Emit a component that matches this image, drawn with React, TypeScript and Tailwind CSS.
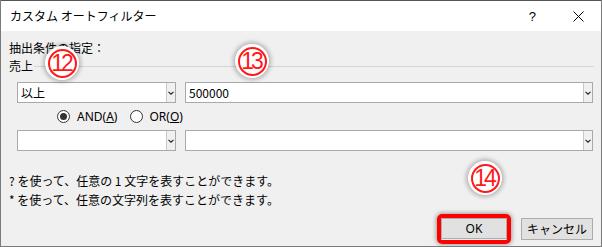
import React from "react";

const font = { fontFamily: '"Noto Sans CJK JP", "Noto Sans", sans-serif' };

function Combo({ value, className }: { value?: string; className: string }) {
  return (
    <div className={`flex h-[21px] border border-[#a9a9a9] bg-white ${className}`}>
      <div className="flex-1 pl-[3px] text-[12px] leading-[19px] text-black">{value}</div>
      <div className="flex w-[9px] items-center justify-center border-l border-[#c8c8c8] bg-[#f0f0f0]">
        <svg width="6" height="4" viewBox="0 0 6 4">
          <path d="M0.5 0.8 L3 3.2 L5.5 0.8" fill="none" stroke="#222" strokeWidth="1.1" />
        </svg>
      </div>
    </div>
  );
}

function Badge({ n, className }: { n: string; className: string }) {
  return (
    <div
      className={`absolute flex h-[34px] w-[34px] items-center justify-center rounded-full bg-white shadow-[0_0_4px_2px_rgba(0,0,0,0.25)] ${className}`}
    >
      <div className="flex h-[29px] w-[29px] items-center justify-center rounded-full border-[2px] border-[#ff1a1a]">
        <span
          className="text-[23px] font-normal leading-none tracking-[-3px] text-[#ff1a1a] pr-[2px]"
          style={{ fontFamily: '"Liberation Sans", sans-serif' }}
        >
          {n}
        </span>
      </div>
    </div>
  );
}

function Radio({ checked }: { checked?: boolean }) {
  return (
    <div className="flex h-[13px] w-[13px] items-center justify-center rounded-full border border-[#333] bg-white">
      {checked && <div className="h-[7px] w-[7px] rounded-full bg-[#333]" />}
    </div>
  );
}

export default function App() {
  return (
    <div
      className="relative h-[247px] w-[602px] overflow-hidden border-x border-b border-[#7a7a7a] bg-[#f0f0f0] text-[12px] text-black"
      style={font}
    >
      {/* title bar */}
      <div className="flex h-[31px] items-center border-t border-[#555] bg-white pl-[9px]">
        <span className="text-[12px] leading-none">カスタム オートフィルター</span>
        <div className="flex-1" />
        <span className="mr-[37px] text-[13px] leading-none" style={{ fontFamily: '"Liberation Sans", sans-serif' }}>?</span>
        <svg width="11" height="11" viewBox="0 0 11 11" className="mr-[17px]">
          <path d="M0.5 0.5 L10.5 10.5 M10.5 0.5 L0.5 10.5" stroke="#000" strokeWidth="1" />
        </svg>
      </div>

      <div className="flex flex-col pl-[8px] pr-[7px]">
        <div className="mt-[9px] h-[15px] leading-[15px]">抽出条件の指定：</div>
        <div className="mt-[3px] flex h-[16px] items-center">
          <span className="leading-[16px]">売上</span>
          <div className="ml-[1px] h-px flex-1 bg-[#d5d5d5]" />
        </div>

        <div className="mt-[8px] flex gap-[9px] pl-[8px] pr-[1px]">
          <Combo value="以上" className="w-[159px]" />
          <Combo value="500000" className="flex-1" />
        </div>

        <div className="mt-[6px] flex h-[15px] items-center pl-[48px]">
          <Radio checked />
          <span className="ml-[7px] leading-none" style={{ fontFamily: '"Noto Sans", sans-serif' }}>
            AND(<span className="underline">A</span>)
          </span>
          <div className="ml-[13px]">
            <Radio />
          </div>
          <span className="ml-[6px] leading-none" style={{ fontFamily: '"Noto Sans", sans-serif' }}>
            OR(<span className="underline">O</span>)
          </span>
        </div>

        <div className="mt-[6px] flex gap-[9px] pl-[8px] pr-[1px]">
          <Combo className="w-[159px]" />
          <Combo className="flex-1" />
        </div>

        <div className="mt-[21px] h-[18px] leading-[18px]">? を使って、任意の 1 文字を表すことができます。</div>
        <div className="mt-[1px] h-[18px] leading-[18px]">* を使って、任意の文字列を表すことができます。</div>

        <div className="mt-[9px] flex justify-end gap-[14px] pr-[1px]">
          <div className="-mx-[4px] -mb-[4px] -mt-[4px] rounded-[5px] border-[4px] border-[#ff0000] shadow-[0_0_4px_1px_rgba(0,0,0,0.35)]">
            <div className="flex h-[21px] w-[66px] items-center justify-center border border-[#adadad] bg-[#e1e1e1]" style={{ fontFamily: '"Noto Sans", sans-serif' }}>
              OK
            </div>
          </div>
          <div className="flex h-[22px] w-[72px] items-center justify-center border border-[#adadad] bg-[#e1e1e1]">
            キャンセル
          </div>
        </div>
      </div>

      <Badge n="12" className="left-[44px] top-[46px]" />
      <Badge n="13" className="left-[234px] top-[44px]" />
      <Badge n="14" className="left-[467px] top-[161px]" />
    </div>
  );
}
